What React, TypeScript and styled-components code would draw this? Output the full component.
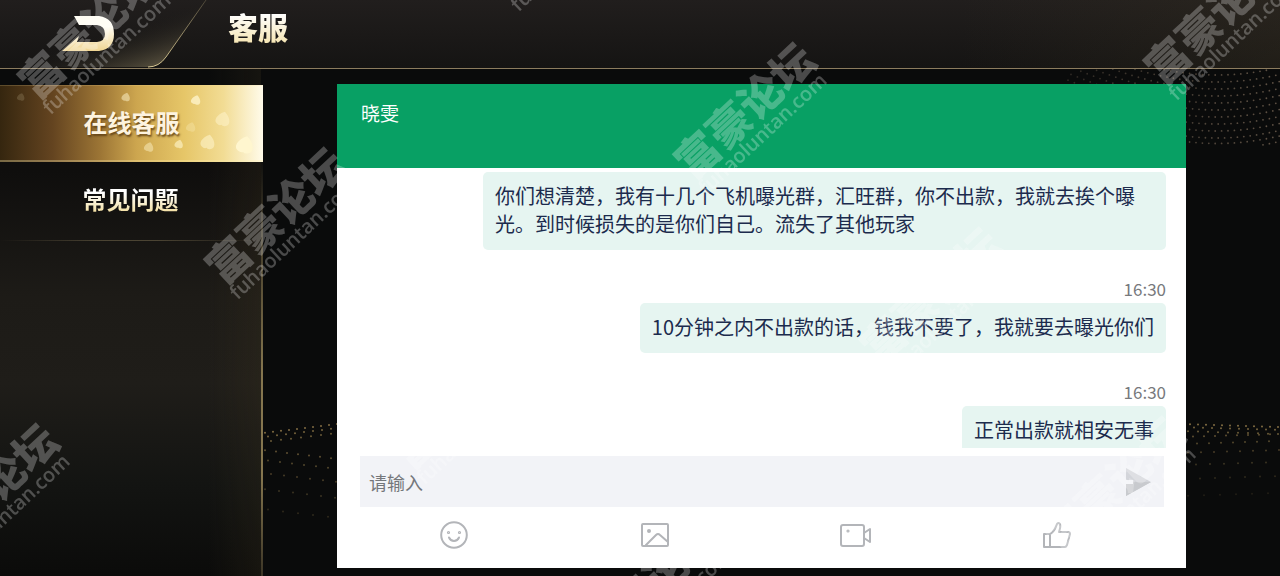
import React from "react";
import styled, { createGlobalStyle } from "styled-components";

const GlobalStyle = createGlobalStyle`
  *, *::before, *::after { box-sizing: border-box; }
  body {
    margin: 0;
    background: #0a0b0b;
    font-family: "Noto Sans CJK SC", sans-serif;
  }
  button, input { font: inherit; border: 0; padding: 0; margin: 0; background: none; }
  button { cursor: pointer; }
  h1, h2, p { margin: 0; }
`;

const Page = styled.div`
  position: relative;
  display: flex;
  flex-direction: column;
  height: 100vh;
  overflow: hidden;
  background: #0a0b0b;
`;

const Backdrop = styled.svg<{ $side: "left" | "right" | "top" }>`
  position: absolute;
  width: ${(p) => (p.$side === "top" ? 220 : 100)}px;
  height: ${(p) => (p.$side === "top" ? 90 : 130)}px;
  ${(p) => p.$side === "left" && "left: 263px; bottom: 30px;"}
  ${(p) => p.$side === "right" && "right: 0; bottom: 30px;"}
  ${(p) => p.$side === "top" && "right: 0; top: 69px;"}
`;

const TopBar = styled.header`
  position: relative;
  flex: none;
  display: flex;
  align-items: stretch;
  height: 69px;
  border-bottom: 1px solid #8c7c5e;
  background: linear-gradient(90deg, transparent 75%, rgba(60, 52, 34, 0.3)),
    linear-gradient(#211e1d, #151413);
`;

const BackButton = styled.button`
  flex: none;
  width: 208px;
  height: 68px;
  svg { display: block; }
`;

const Title = styled.h1`
  margin-left: 20px;
  font-size: 30px;
  line-height: 52px;
  font-weight: 900;
  color: transparent;
  background: linear-gradient(#fff 20%, #f3dfa0 75%);
  background-clip: text;
  -webkit-background-clip: text;
`;

const Body = styled.div`
  position: relative;
  flex: 1;
  min-height: 0;
  display: flex;
`;

const Sidebar = styled.nav`
  flex: none;
  width: 263px;
  padding-top: 16px;
  border-right: 2px solid;
  border-image: linear-gradient(#0a0b0b 16%, #3a3425 30%, #85764f 60%, #85764f 80%, #3a3425) 1;
  background: linear-gradient(90deg, transparent 80%, rgba(70, 58, 34, 0.2)),
    linear-gradient(#0a0b0b 3%, #0f0e0d 20%, #1d1b17 45%, #1f1d19 62%, #131412 82%, #0b0b0a);
`;

const Tab = styled.button<{ $active?: boolean }>`
  position: relative;
  display: block;
  width: ${(p) => (p.$active ? "263px" : "100%")};
  height: ${(p) => (p.$active ? 77 : 78)}px;
  padding-bottom: 4px;
  font-size: 24px;
  line-height: 72px;
  font-weight: 700;
  text-align: center;
  color: ${(p) => (p.$active ? "#fdf3df" : "transparent")};
  background: ${(p) =>
    p.$active
      ? `linear-gradient(90deg, #35260f, #644420 20%, #9c7535 38%, #cda64f 52%, #e6c668 70%, #f2dc94 85%, #fffbea)`
      : `linear-gradient(#fff 40%, #f3dfa0 65%)`};
  ${(p) =>
    p.$active
      ? "box-shadow: inset 0 1px #f3dc9a33, inset 0 -2px #fff0b055;"
      : "background-clip: text; -webkit-background-clip: text;"}
`;

const TabLabel = styled.span`
  position: relative;
  text-shadow: 1px 2px 2px rgba(96, 64, 20, 0.9);
`;

const Sparkles = styled.svg`
  position: absolute;
  inset: 0;
`;

const Divider = styled.div`
  height: 1px;
  background: linear-gradient(90deg, transparent, #4b4433 40%, #4b4433 60%, transparent);
`;

const Main = styled.main`
  flex: 1;
  min-width: 0;
  display: flex;
  padding: 15px 94px 8px 74px;
`;

const Chat = styled.section`
  flex: 1;
  min-width: 0;
  display: flex;
  flex-direction: column;
  background: #fff;
`;

const ChatHeader = styled.header`
  flex: none;
  height: 84px;
  padding: 15px 24px;
  background: #08a064;
`;

const AgentName = styled.h2`
  font-size: 19px;
  line-height: 28px;
  font-weight: 400;
  color: #fff;
`;

const Messages = styled.div`
  flex: 1;
  min-height: 0;
  overflow: hidden;
  display: flex;
  flex-direction: column;
  gap: 27px;
  padding: 4px 20px 0 24px;
`;

const Message = styled.div`
  flex: none;
  display: flex;
  flex-direction: column;
  align-items: flex-end;
  gap: 2px;
`;

const Time = styled.time`
  font-size: 17px;
  line-height: 24px;
  color: #77797c;
`;

const Bubble = styled.p`
  max-width: 683px;
  padding: 10px 12px 12px;
  border-radius: 5px;
  font-size: 20px;
  line-height: 28px;
  color: #1c2b4d;
  background: #e6f5f1;
`;

const Composer = styled.form`
  flex: none;
  display: flex;
  align-items: center;
  height: 51px;
  margin: 8px 22px 0 23px;
  padding: 0 12px 0 9px;
  background: #f2f3f7;
`;

const TextInput = styled.input`
  flex: 1;
  min-width: 0;
  height: 50px;
  font-size: 18px;
  color: #1c2b4d;
  outline: none;
  &::placeholder { color: #75777b; opacity: 1; }
`;

const IconButton = styled.button`
  display: flex;
  align-items: center;
  justify-content: center;
`;

const Tools = styled.div`
  flex: none;
  display: grid;
  grid-template-columns: repeat(4, 1fr);
  height: 61px;
  padding: 0 29px 5px 16px;
`;

const LineIcon = styled.svg`
  fill: none;
  stroke: #b3b5b9;
  stroke-width: 2;
  stroke-linejoin: round;
  stroke-linecap: round;
`;

const WatermarkLayer = styled.div`
  position: absolute;
  inset: 0;
  overflow: hidden;
  pointer-events: none;
`;

const Mark = styled.div`
  position: absolute;
  width: 184px;
  transform-origin: 22px 22px;
  transform: rotate(-43deg);
  color: #fff;
  opacity: 0.26;
  white-space: nowrap;
`;

const MarkName = styled.div`
  font-size: 43px;
  line-height: 44px;
  font-weight: 900;
`;

const MarkUrl = styled.div`
  font-family: "Open Sans", sans-serif;
  font-size: 20px;
  line-height: 20px;
  font-weight: 600;
`;

/* Centre of the first character of each repeated mark. */
const marks = [
  [40, 72], [227, 257], [414, 442], [601, 627], [-61, 533],
  [508, -31], [696, 152], [882, 337], [1065, 526], [1166, 58],
];

type Dot = { x: number; y: number; r: number; o: number };

const waveDots = (mirror: boolean): Dot[] => {
  const dots: Dot[] = [];
  const rows = mirror ? [0, 3, 7, 13, 20, 29, 41, 55, 72] : [0, 4, 9, 17, 27, 40, 56, 76];
  rows.forEach((top, row) => {
    const step = 8 + row;
    for (let x = 2 + (row % 3) * 3; x < 100; x += step) {
      const slope = mirror ? (row < 3 ? 0.03 : -0.03) : row < 3 ? -0.12 : 0.12;
      dots.push({ x, y: 11 + top + (mirror ? -3 : 6) + x * slope, r: 1, o: 0.75 - row * 0.075 });
    }
  });
  return dots;
};

const arcDots = (): Dot[] => {
  const dots: Dot[] = [];
  for (let row = 0; row < 14; row++) {
    for (let i = 0; i < 34; i++) {
      const x = 8 + i * 6.4 + (row % 2) * 3;
      const t = x / 220;
      const y = -34 + row * 7 + 40 * Math.sin(t * 2.2) - (row > 9 ? (row - 9) * 1.5 : 0);
      if (y > 0 && y < 76 && x < 220) {
        dots.push({ x, y, r: 0.9, o: 0.2 + 0.3 * t });
      }
    }
  }
  return dots;
};

const Dots = ({ dots, color }: { dots: Dot[]; color: string }) => (
  <>
    {dots.map((d, i) => (
      <circle key={i} cx={d.x} cy={d.y} r={d.r} fill={color} opacity={d.o} />
    ))}
  </>
);

const BackIcon = () => (
  <svg width="208" height="68" viewBox="0 0 208 68" aria-hidden="true">
    <defs>
      <linearGradient id="tabFill" x1="0" y1="0" x2="1" y2="1">
        <stop offset="0.5" stopColor="#1a1816" stopOpacity="0" />
        <stop offset="1" stopColor="#8c8060" stopOpacity="0.95" />
      </linearGradient>
      <linearGradient id="tabEdge" x1="0" y1="0" x2="0" y2="1">
        <stop offset="0" stopColor="#4a4436" />
        <stop offset="1" stopColor="#d8c893" />
      </linearGradient>
      <linearGradient id="arrow" x1="0" y1="0" x2="0" y2="1">
        <stop offset="0.3" stopColor="#fffdf4" />
        <stop offset="1" stopColor="#efd592" />
      </linearGradient>
    </defs>
    <path d="M0 0H206L166 57Q159 67 148 67H0Z" fill="url(#tabFill)" />
    <path d="M206 0L166 57Q159 67 148 67" fill="none" stroke="url(#tabEdge)" strokeWidth="1" />
    <path
      d="M74 16H99Q114 18 114 34Q114 49 99 51H62L79 36L77 42H97Q105 41 105 34Q105 26 97 25H79Z"
      fill="url(#arrow)"
    />
  </svg>
);

const heartAt = (x: number, y: number, s: number, o: number) => (
  <path
    key={`${x}-${y}`}
    transform={`translate(${x} ${y}) rotate(195) scale(${s})`}
    d="M0 5C-5 2-6-3-3-4Q-1-5 0-4Q1-5 3-4C6-3 5 2 0 5Z"
    fill="#fff6cf"
    opacity={o}
  />
);

const messages = [
  { text: "你们想清楚，我有十几个飞机曝光群，汇旺群，你不出款，我就去挨个曝光。到时候损失的是你们自己。流失了其他玩家" },
  { time: "16:30", text: "10分钟之内不出款的话，钱我不要了，我就要去曝光你们" },
  { time: "16:30", text: "正常出款就相安无事" },
];

export default function App() {
  return (
    <Page>
      <GlobalStyle />
      <Backdrop $side="left" viewBox="0 0 100 130" aria-hidden="true">
        <Dots dots={waveDots(false)} color="#a98d55" />
      </Backdrop>
      <Backdrop $side="right" viewBox="0 0 100 130" aria-hidden="true">
        <Dots dots={waveDots(true)} color="#a98d55" />
      </Backdrop>
      <Backdrop $side="top" viewBox="0 0 220 90" aria-hidden="true">
        <Dots dots={arcDots()} color="#b59a80" />
      </Backdrop>

      <TopBar>
        <BackButton type="button" aria-label="返回">
          <BackIcon />
        </BackButton>
        <Title>客服</Title>
      </TopBar>

      <Body>
        <Sidebar>
          <Tab type="button" $active>
            <Sparkles width="263" height="77" viewBox="0 0 263 77" aria-hidden="true">
              {heartAt(21, 12, 0.8, 0.15)}
              {heartAt(126, 12, 0.9, 0.5)}
              {heartAt(196, 15, 1, 0.75)}
              {heartAt(223, 34, 1.5, 0.5)}
              {heartAt(191, 42, 1, 0.25)}
              {heartAt(149, 62, 1, 0.45)}
              {heartAt(179, 59, 0.9, 0.6)}
              {heartAt(208, 57, 1.5, 0.55)}
              {heartAt(245, 60, 1.8, 1)}
            </Sparkles>
            <TabLabel>在线客服</TabLabel>
          </Tab>
          <Tab type="button">常见问题</Tab>
          <Divider />
        </Sidebar>

        <Main>
          <Chat>
            <ChatHeader>
              <AgentName>晓雯</AgentName>
            </ChatHeader>
            <Messages>
              {messages.map((m) => (
                <Message key={m.text}>
                  {m.time && <Time>{m.time}</Time>}
                  <Bubble>{m.text}</Bubble>
                </Message>
              ))}
            </Messages>
            <Composer onSubmit={(e) => e.preventDefault()}>
              <TextInput type="text" placeholder="请输入" aria-label="请输入" />
              <IconButton type="submit" aria-label="发送">
                <svg width="26" height="28" viewBox="0 0 26 28" aria-hidden="true">
                  <path d="M0 0L25 14L0 28V16H7V12H0Z" fill="#d3d5da" />
                  <path d="M0 28L25 14H7V16H0Z" fill="#c8cace" />
                </svg>
              </IconButton>
            </Composer>
            <Tools>
              <IconButton type="button" aria-label="表情">
                <LineIcon width="28" height="28" viewBox="0 0 28 28">
                  <circle cx="14" cy="14" r="12.8" />
                  <path d="M9 16.5Q10.5 20 14 20T19 16.5" />
                  <circle cx="8.5" cy="11.5" r="0.6" />
                  <circle cx="19.5" cy="11.5" r="0.6" />
                </LineIcon>
              </IconButton>
              <IconButton type="button" aria-label="图片">
                <LineIcon width="28" height="24" viewBox="0 0 28 24">
                  <rect x="1" y="1" width="26" height="22" rx="1" />
                  <circle cx="8" cy="8" r="1" />
                  <path d="M5 22L15 12Q17 10 19 12L27 19" />
                </LineIcon>
              </IconButton>
              <IconButton type="button" aria-label="视频">
                <LineIcon width="32" height="24" viewBox="0 0 32 24">
                  <rect x="1" y="2" width="23" height="21" rx="2" />
                  <circle cx="8" cy="8" r="0.6" />
                  <path d="M24 10L30 6V19L24 15" />
                </LineIcon>
              </IconButton>
              <IconButton type="button" aria-label="点赞">
                <LineIcon width="28" height="28" viewBox="0 0 28 28">
                  <path d="M1 13H7V26H1ZM7 13C11 11 12 8 14 3Q15 1 17 3C18 5 17 8 16 11H25Q27 11 27 13L24 24Q23 26 22 26H7" />
                </LineIcon>
              </IconButton>
            </Tools>
          </Chat>
        </Main>
      </Body>

      <WatermarkLayer aria-hidden="true">
        {marks.map(([x, y]) => (
          <Mark key={`${x},${y}`} style={{ left: x - 22, top: y - 22 }}>
            <MarkName>富豪论坛</MarkName>
            <MarkUrl>fuhaoluntan.com</MarkUrl>
          </Mark>
        ))}
      </WatermarkLayer>
    </Page>
  );
}
